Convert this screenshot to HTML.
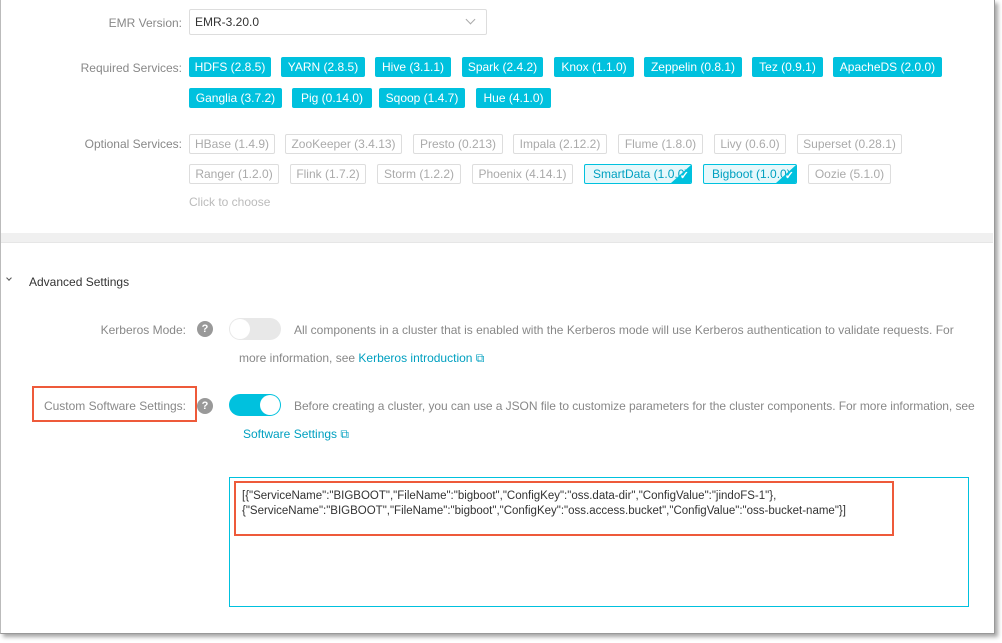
<!DOCTYPE html>
<html><head><meta charset="utf-8"><style>
body{margin:0;width:1002px;height:643px;background:#fff;font-family:"Liberation Sans",sans-serif;font-size:12px;color:#333;position:relative;overflow:hidden}
.a{position:absolute;white-space:nowrap}
.panel{position:absolute;left:0;top:0;width:993px;height:633px;background:#fff;border-left:1px solid #bbb;border-right:1px solid #999;border-bottom:1px solid #999;box-shadow:3px 3px 4px rgba(0,0,0,.35)}
.lbl{color:#888;text-align:right}
.t{position:absolute;height:20px;line-height:20px;text-align:center;font-size:12px;box-sizing:border-box;border-radius:2px}
.r{background:#00c1de;color:#fff}
.o{border:1px solid #ddd;color:#aaa;line-height:18px}
.s{border:1px solid #00c1de;color:#00a0c0;background:#e6f8fb;line-height:18px;overflow:hidden}
.s:after{content:"";position:absolute;right:0;bottom:0;border-left:20px solid transparent;border-bottom:18px solid #00c1de}
.s b{position:absolute;right:2px;bottom:1px;color:#fff;z-index:1;font-size:11px;line-height:12px;font-weight:bold}
.lk{color:#00a0c0}
.q{position:absolute;width:16px;height:16px;border-radius:50%;background:#999;color:#fff;font-weight:bold;font-size:11px;line-height:16px;text-align:center}
</style></head><body>
<div class="panel"></div>
<div class="a lbl" style="left:60px;top:16px;width:122px">EMR Version:</div>
<div class="a" style="left:189px;top:9px;width:298px;height:26px;border:1px solid #ddd;box-sizing:border-box;border-radius:2px;line-height:24px;padding-left:5px;color:#333">EMR-3.20.0<span style="position:absolute;right:12px;top:6px;width:6px;height:6px;border-right:1px solid #aaa;border-bottom:1px solid #aaa;transform:rotate(45deg)"></span></div>
<div class="a lbl" style="left:40px;top:61px;width:142px">Required Services:</div>
<div class="t r" style="left:189px;top:57px;width:82px">HDFS (2.8.5)</div>
<div class="t r" style="left:281px;top:57px;width:84px">YARN (2.8.5)</div>
<div class="t r" style="left:375px;top:57px;width:76px">Hive (3.1.1)</div>
<div class="t r" style="left:462px;top:57px;width:81px">Spark (2.4.2)</div>
<div class="t r" style="left:554px;top:57px;width:80px">Knox (1.1.0)</div>
<div class="t r" style="left:644px;top:57px;width:98px">Zeppelin (0.8.1)</div>
<div class="t r" style="left:752px;top:57px;width:71px">Tez (0.9.1)</div>
<div class="t r" style="left:833px;top:57px;width:109px">ApacheDS (2.0.0)</div>
<div class="t r" style="left:189px;top:88px;width:93px">Ganglia (3.7.2)</div>
<div class="t r" style="left:292px;top:88px;width:80px">Pig (0.14.0)</div>
<div class="t r" style="left:379px;top:88px;width:86px">Sqoop (1.4.7)</div>
<div class="t r" style="left:476px;top:88px;width:75px">Hue (4.1.0)</div>
<div class="a lbl" style="left:40px;top:137px;width:142px">Optional Services:</div>
<div class="t o" style="left:189px;top:134px;width:86px">HBase (1.4.9)</div>
<div class="t o" style="left:285px;top:134px;width:117px">ZooKeeper (3.4.13)</div>
<div class="t o" style="left:413px;top:134px;width:90px">Presto (0.213)</div>
<div class="t o" style="left:513px;top:134px;width:94px">Impala (2.12.2)</div>
<div class="t o" style="left:618px;top:134px;width:85px">Flume (1.8.0)</div>
<div class="t o" style="left:714px;top:134px;width:72px">Livy (0.6.0)</div>
<div class="t o" style="left:797px;top:134px;width:105px">Superset (0.28.1)</div>
<div class="t o" style="left:189px;top:164px;width:90px">Ranger (1.2.0)</div>
<div class="t o" style="left:290px;top:164px;width:76px">Flink (1.7.2)</div>
<div class="t o" style="left:377px;top:164px;width:84px">Storm (1.2.2)</div>
<div class="t o" style="left:472px;top:164px;width:101px">Phoenix (4.14.1)</div>
<div class="t s" style="left:584px;top:164px;width:108px;text-align:left;padding-left:8px">SmartData (1.0.0)<b>✓</b></div>
<div class="t s" style="left:703px;top:164px;width:94px;text-align:left;padding-left:8px">Bigboot (1.0.0)<b>✓</b></div>
<div class="t o" style="left:808px;top:164px;width:83px">Oozie (5.1.0)</div>
<div class="a" style="left:189px;top:195px;color:#bbb">Click to choose</div>
<div class="a" style="left:1px;top:233px;width:992px;height:9px;background:#f0f0f0;border-bottom:1px solid #e6e6e6"></div>
<div class="a" style="left:7px;top:276px;width:3px;height:3px;border-right:1px solid #555;border-bottom:1px solid #555;transform:rotate(45deg)"></div>
<div class="a" style="left:29px;top:275px;color:#333">Advanced Settings</div>
<div class="a lbl" style="left:60px;top:323px;width:126px">Kerberos Mode:</div>
<div class="q" style="left:197px;top:321px">?</div>
<div class="a" style="left:229px;top:318px;width:52px;height:22px;border-radius:11px;background:#e8e8e8"><div style="position:absolute;left:1px;top:1px;width:20px;height:20px;border-radius:50%;background:#fff"></div></div>
<div class="a" style="left:294px;top:323px;color:#888">All components in a cluster that is enabled with the Kerberos mode will use Kerberos authentication to validate requests. For</div>
<div class="a" style="left:239px;top:351px;color:#888">more information, see <span class="lk">Kerberos introduction &#10697;</span></div>
<div class="a" style="left:32px;top:386px;width:165px;height:36px;border:2px solid #ee5a3a;box-sizing:border-box"></div>
<div class="a lbl" style="left:40px;top:399px;width:146px">Custom Software Settings:</div>
<div class="q" style="left:197px;top:398px">?</div>
<div class="a" style="left:229px;top:394px;width:52px;height:22px;border-radius:11px;background:#00c1de"><div style="position:absolute;right:1px;top:1px;width:20px;height:20px;border-radius:50%;background:#fff"></div></div>
<div class="a" style="left:294px;top:399px;color:#888;letter-spacing:-0.06px">Before creating a cluster, you can use a JSON file to customize parameters for the cluster components. For more information, see</div>
<div class="a lk" style="left:243px;top:427px">Software Settings &#10697;</div>
<div class="a" style="left:229px;top:477px;width:740px;height:130px;border:1px solid #00c1de;box-sizing:border-box"></div>
<div class="a" style="left:234px;top:481px;width:660px;height:55px;border:2px solid #ee5a3a;box-sizing:border-box"></div>
<div class="a" style="left:242px;top:489px;color:#333;line-height:15px;font-size:11.5px">[{"ServiceName":"BIGBOOT","FileName":"bigboot","ConfigKey":"oss.data-dir","ConfigValue":"jindoFS-1"},<br>{"ServiceName":"BIGBOOT","FileName":"bigboot","ConfigKey":"oss.access.bucket","ConfigValue":"oss-bucket-name"}]</div>
</body></html>
